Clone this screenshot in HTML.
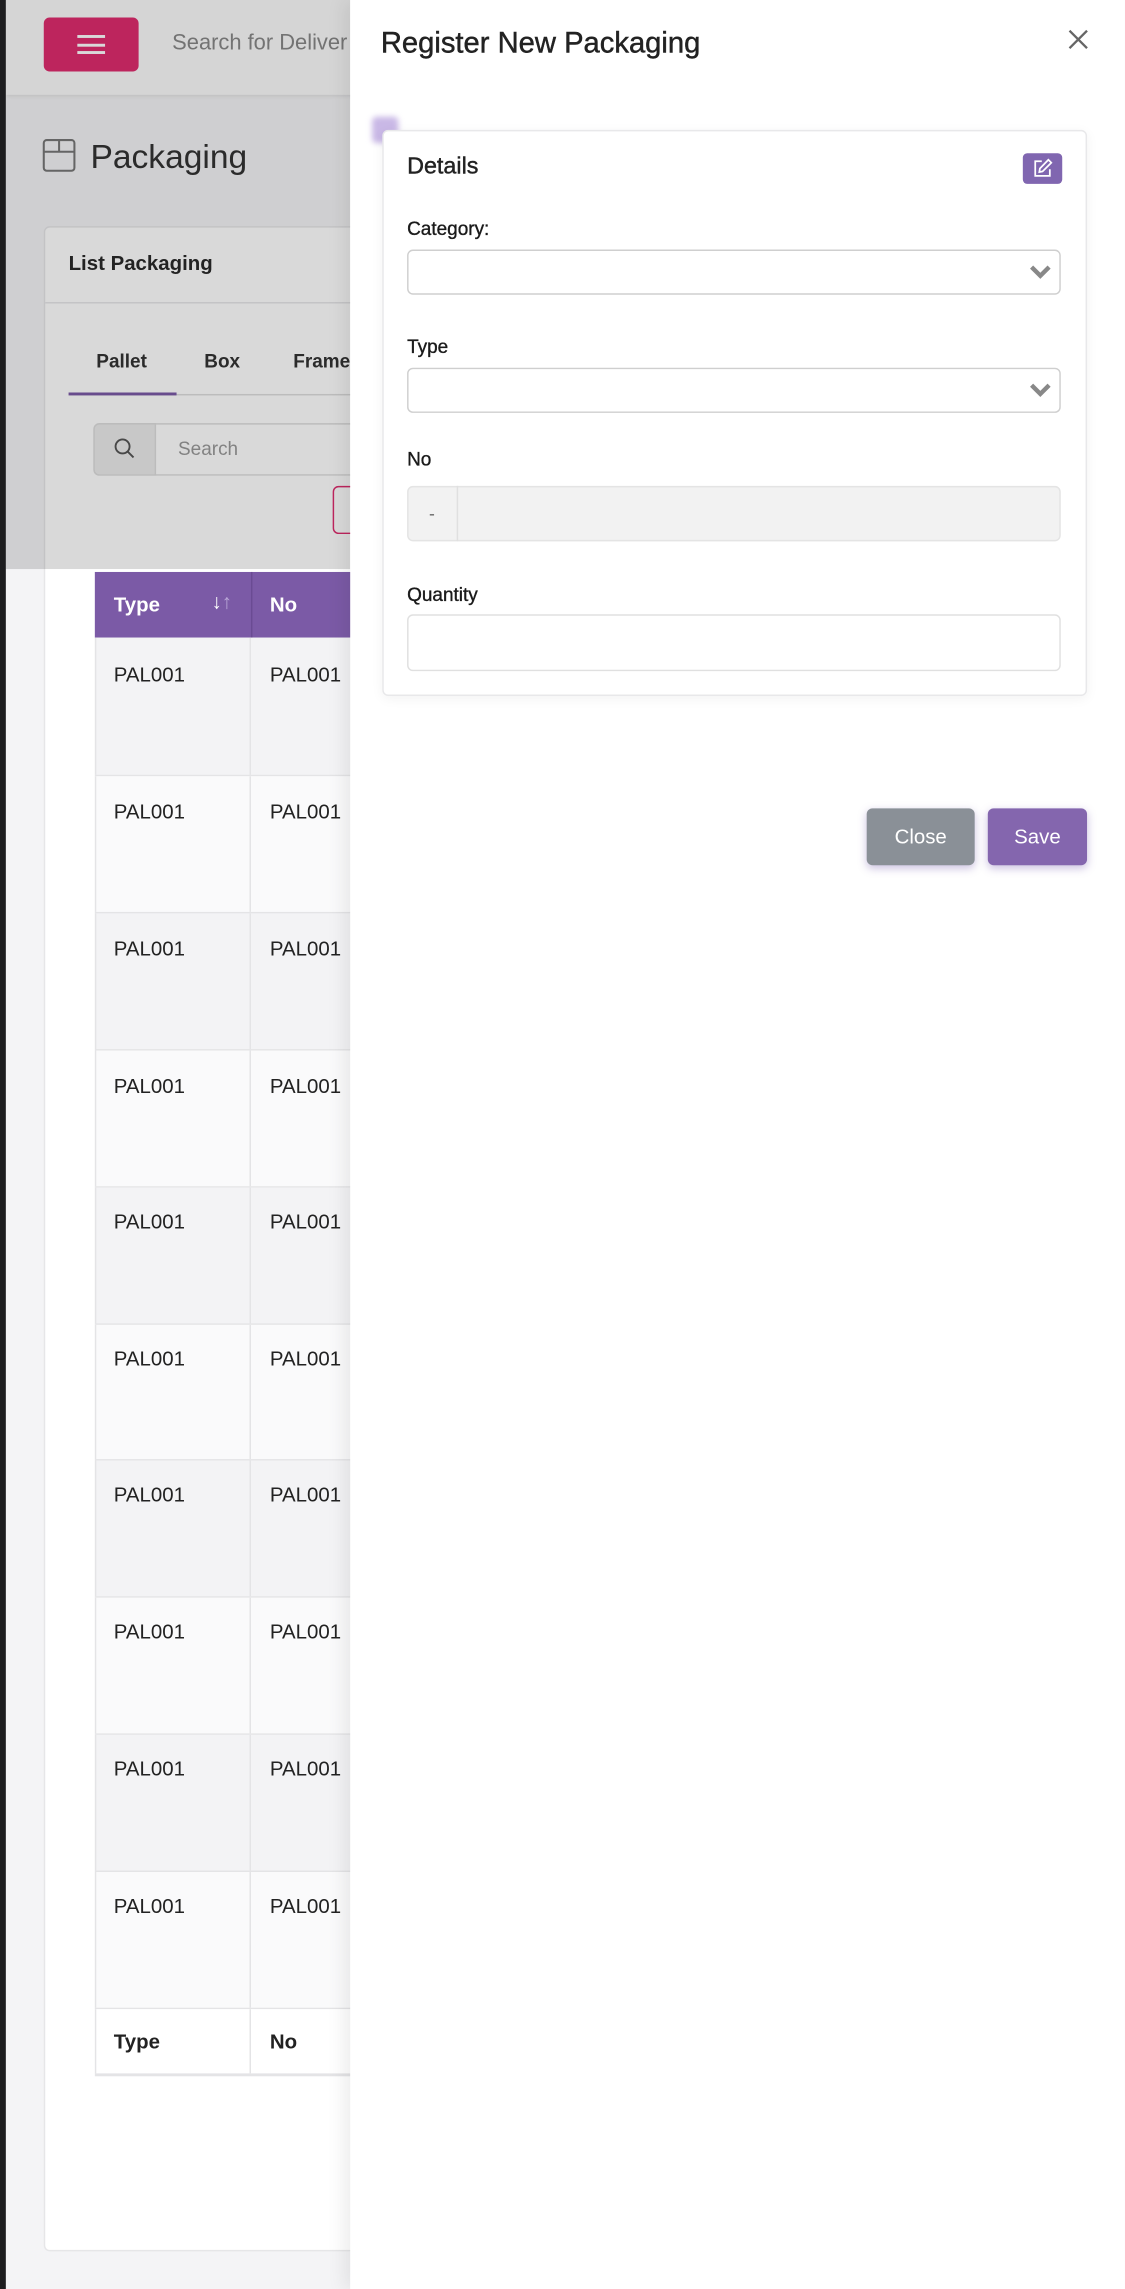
<!DOCTYPE html>
<html><head><meta charset="utf-8"><style>
*{box-sizing:border-box;margin:0;padding:0}
html,body{width:1125px;height:2289px;overflow:hidden;background:#f4f4f6;font-family:"Liberation Sans",Arial,sans-serif}
#w{position:absolute;left:0;top:0;width:771px;height:1569px;transform:scale(1.4591);transform-origin:0 0;overflow:hidden}
.a{position:absolute}
.strip{left:0;top:0;width:4px;height:1569px;background:#1d1d1f;z-index:20}
.hdr{left:4px;top:0;width:767px;height:65px;background:#fbfbfb;box-shadow:0 1px 3px rgba(0,0,0,.1)}
.ham{left:30px;top:12px;width:65px;height:37px;background:#de2c6e;border-radius:4px}
.ham i{position:absolute;left:23px;width:19px;height:2px;background:#fff}
.card{left:30px;top:155px;width:400px;height:1388px;background:#fff;border:1px solid #e6e6e8;border-radius:4px}
.t{font-size:14px;color:#222}
.row{position:absolute;left:65px;width:330px;border-bottom:1px solid #e4e4e6}
.c1{position:absolute;left:0;top:0;width:107px;height:100%;border-left:1px solid #e4e4e6;border-right:1px solid #e4e4e6}
.ov{left:4px;top:0;width:236px;height:390px;background:rgba(0,0,0,.15);z-index:5}
.drawer{left:240px;top:0;width:531px;height:1569px;background:#fff;z-index:10;box-shadow:-4px 0 12px rgba(0,0,0,.08)}
.lbl{position:absolute;left:39px;font-size:13px;color:#1a1a1a;-webkit-text-stroke:0.25px #1a1a1a}
.sel{position:absolute;left:39px;width:448px;height:31px;border:1px solid #cfcfcf;border-radius:4px;background:#fff}
.btn{position:absolute;top:554px;height:39px;border-radius:4px;color:#fff;font-size:14px;text-align:center;line-height:39px;box-shadow:0 2px 6px rgba(110,80,170,.35)}
</style></head><body><div id="w">
<div class="a strip"></div>
<div class="a hdr"></div>
<div class="a ham"><i style="top:12px"></i><i style="top:17.5px"></i><i style="top:23px"></i></div>
<div class="a" style="left:118px;top:21px;font-size:15px;color:#888;white-space:nowrap">Search for Deliver</div>
<svg class="a" style="left:29px;top:95px" width="23" height="23" viewBox="0 0 23 23"><rect x="1" y="1" width="21" height="21" rx="2" fill="none" stroke="#777" stroke-width="1.4"/><path d="M1 9H22M11.5 1V9" stroke="#777" stroke-width="1.4" fill="none"/></svg>
<div class="a" style="left:62px;top:94px;font-size:23px;color:#333">Packaging</div>
<div class="a card"></div>
<div class="a" style="left:47px;top:172px;font-size:14px;font-weight:bold;color:#2a2a2a">List Packaging</div>
<div class="a" style="left:31px;top:207px;width:399px;height:1px;background:#e6e6e8"></div>
<div class="a" style="left:66px;top:240px;font-size:13px;font-weight:bold;color:#333">Pallet</div>
<div class="a" style="left:140px;top:240px;font-size:13px;font-weight:bold;color:#333">Box</div>
<div class="a" style="left:201px;top:240px;font-size:13px;font-weight:bold;color:#333">Frame</div>
<div class="a" style="left:47px;top:270px;width:380px;height:1px;background:#ddd"></div>
<div class="a" style="left:47px;top:269px;width:74px;height:2px;background:#7b5aa6"></div>
<div class="a" style="left:64px;top:290px;width:300px;height:36px;border:1px solid #ddd;border-radius:4px;background:#fff"></div>
<div class="a" style="left:64px;top:290px;width:43px;height:36px;border:1px solid #ddd;border-radius:4px 0 0 4px;background:#ececec"></div>
<svg class="a" style="left:78px;top:300px" width="15" height="15" viewBox="0 0 15 15"><circle cx="6" cy="6" r="4.8" fill="none" stroke="#555" stroke-width="1.3"/><path d="M9.5 9.5L13.5 13.5" stroke="#555" stroke-width="1.3"/></svg>
<div class="a" style="left:122px;top:300px;font-size:13px;color:#999">Search</div>
<div class="a" style="left:228px;top:333px;width:60px;height:33px;border:1px solid #de2c6e;border-radius:4px"></div>
<div class="a ov"></div>
<div class="a" style="left:65px;top:392px;width:330px;height:45px;background:#7b5aa6"></div>
<div class="a" style="left:172px;top:392px;width:1px;height:45px;background:#6a4b93"></div>
<div class="a" style="left:78px;top:406px;font-size:14px;font-weight:bold;color:#fff">Type</div>
<div class="a" style="left:145px;top:404px;font-size:14px;color:#fff">↓<span style="color:#b9a6d6">↑</span></div>
<div class="a" style="left:185px;top:406px;font-size:14px;font-weight:bold;color:#fff">No</div>
<div class="row" style="top:437px;height:95px;background:#f3f3f5"><div class="c1"></div><div class="a t" style="left:13px;top:17px">PAL001</div><div class="a t" style="left:120px;top:17px">PAL001</div></div>
<div class="row" style="top:532px;height:94px;background:#fafafb"><div class="c1"></div><div class="a t" style="left:13px;top:16px">PAL001</div><div class="a t" style="left:120px;top:16px">PAL001</div></div>
<div class="row" style="top:626px;height:94px;background:#f3f3f5"><div class="c1"></div><div class="a t" style="left:13px;top:16px">PAL001</div><div class="a t" style="left:120px;top:16px">PAL001</div></div>
<div class="row" style="top:720px;height:94px;background:#fafafb"><div class="c1"></div><div class="a t" style="left:13px;top:16px">PAL001</div><div class="a t" style="left:120px;top:16px">PAL001</div></div>
<div class="row" style="top:814px;height:94px;background:#f3f3f5"><div class="c1"></div><div class="a t" style="left:13px;top:15px">PAL001</div><div class="a t" style="left:120px;top:15px">PAL001</div></div>
<div class="row" style="top:908px;height:93px;background:#fafafb"><div class="c1"></div><div class="a t" style="left:13px;top:15px">PAL001</div><div class="a t" style="left:120px;top:15px">PAL001</div></div>
<div class="row" style="top:1001px;height:94px;background:#f3f3f5"><div class="c1"></div><div class="a t" style="left:13px;top:15px">PAL001</div><div class="a t" style="left:120px;top:15px">PAL001</div></div>
<div class="row" style="top:1095px;height:94px;background:#fafafb"><div class="c1"></div><div class="a t" style="left:13px;top:15px">PAL001</div><div class="a t" style="left:120px;top:15px">PAL001</div></div>
<div class="row" style="top:1189px;height:94px;background:#f3f3f5"><div class="c1"></div><div class="a t" style="left:13px;top:15px">PAL001</div><div class="a t" style="left:120px;top:15px">PAL001</div></div>
<div class="row" style="top:1283px;height:94px;background:#fafafb"><div class="c1"></div><div class="a t" style="left:13px;top:15px">PAL001</div><div class="a t" style="left:120px;top:15px">PAL001</div></div>
<div class="row" style="top:1377px;height:46px;background:#fff;border-bottom:2px solid #e4e4e6"><div class="c1"></div><div class="a t" style="left:13px;top:14px;font-weight:bold">Type</div><div class="a t" style="left:120px;top:14px;font-weight:bold">No</div></div>
<div class="a drawer">
<div class="a" style="left:21px;top:19px;font-size:20px;color:#222;-webkit-text-stroke:0.3px #222">Register New Packaging</div>
<svg class="a" style="left:492px;top:20px" width="14" height="14" viewBox="0 0 14 14"><path d="M1 1L13 13M13 1L1 13" stroke="#666" stroke-width="1.6"/></svg>
<div class="a" style="left:15px;top:80px;width:18px;height:18px;background:#c9b8e6;border-radius:3px;filter:blur(2px)"></div>
<div class="a" style="left:22px;top:89px;width:483px;height:388px;border:1px solid #e8e8ea;border-radius:4px;background:#fff;box-shadow:0 2px 8px rgba(0,0,0,.05)">
<div class="a" style="left:16px;top:16px;font-size:16px;color:#222;-webkit-text-stroke:0.3px #222">Details</div>
<div class="a" style="left:438px;top:15px;width:27px;height:21px;background:#8066b0;border-radius:3px"><svg class="a" style="left:6px;top:3px" width="15" height="15" viewBox="0 0 15 15"><path d="M7 2.5H2.5V12.5H12.5V8" fill="none" stroke="#fff" stroke-width="1.2"/><path d="M11.5 1.5L13.5 3.5L7.5 9.5L5.3 9.9L5.7 7.5Z" fill="none" stroke="#fff" stroke-width="1.2"/></svg></div>
</div>
<div class="lbl" style="top:149px">Category:</div>
<div class="sel" style="top:171px"><svg class="a" style="left:425px;top:9px" width="16" height="11" viewBox="0 0 16 11"><path d="M2 2L8 8L14 2" fill="none" stroke="#888" stroke-width="3"/></svg></div>
<div class="lbl" style="top:230px">Type</div>
<div class="sel" style="top:252px"><svg class="a" style="left:425px;top:9px" width="16" height="11" viewBox="0 0 16 11"><path d="M2 2L8 8L14 2" fill="none" stroke="#888" stroke-width="3"/></svg></div>
<div class="lbl" style="top:307px">No</div>
<div class="a" style="left:39px;top:333px;width:448px;height:38px;border:1px solid #e4e4e4;border-radius:4px;background:#f2f2f2"></div>
<div class="a" style="left:73px;top:333px;width:1px;height:38px;background:#e0e0e0"></div>
<div class="a" style="left:54px;top:345px;font-size:12px;color:#666">-</div>
<div class="lbl" style="top:400px">Quantity</div>
<div class="a" style="left:39px;top:421px;width:448px;height:39px;border:1px solid #e0e0e0;border-radius:4px;background:#fff"></div>
<div class="btn" style="left:354px;width:74px;background:#8a9097">Close</div>
<div class="btn" style="left:437px;width:68px;background:#8466ae">Save</div>
</div>
</div></body></html>
